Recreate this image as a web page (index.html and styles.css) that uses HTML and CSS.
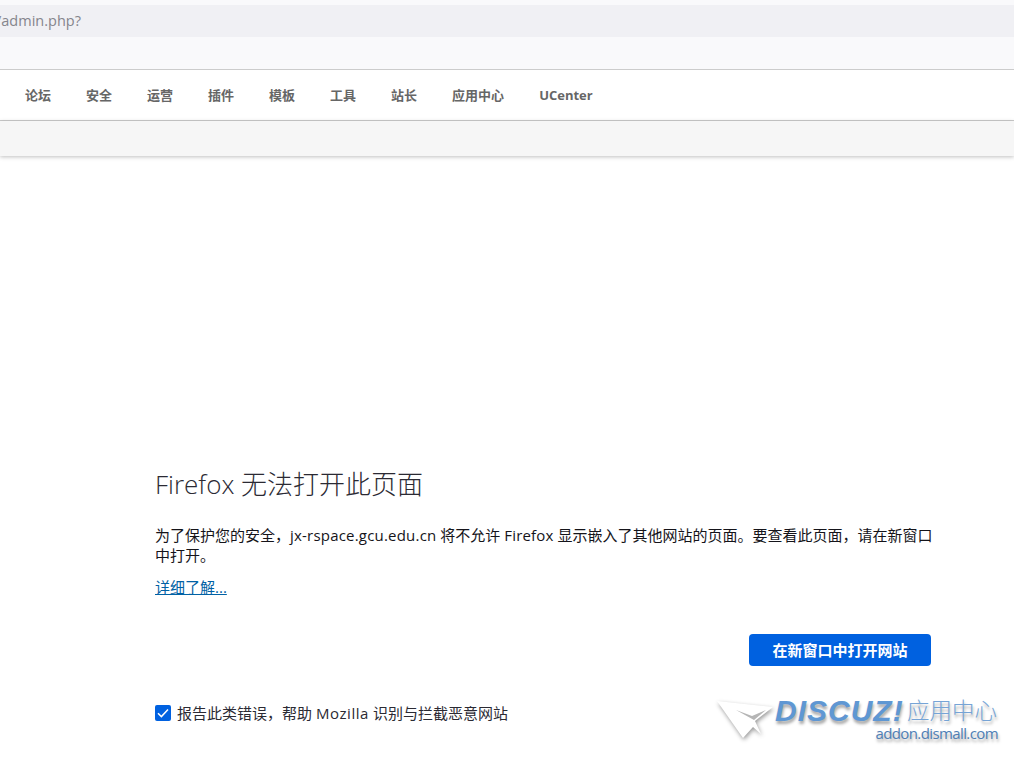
FILE: index.html
```html
<!DOCTYPE html>
<html lang="zh-CN">
<head>
    <meta charset="UTF-8">
    <title>Firefox 无法打开此页面</title>
    <link rel="stylesheet" href="styles.css">
</head>
<body>
    <!-- Barra do navegador -->
    <div class="urlbar-wrap">
        <div class="urlbar">/admin.php?</div>
    </div>
    <div class="toolbar"></div>

    <!-- Menu -->
    <nav class="nav">
        <a>论坛</a>
        <a>安全</a>
        <a>运营</a>
        <a>插件</a>
        <a>模板</a>
        <a>工具</a>
        <a>站长</a>
        <a>应用中心</a>
        <a class="nav-latin">UCenter</a>
    </nav>
    <div class="subbar"></div>

    <!-- Erro -->
    <main class="error">
        <h1>Firefox 无法打开此页面</h1>
        <p class="desc">为了保护您的安全，<span class="latin">jx-rspace.gcu.edu.cn</span> 将不允许 <span class="latin">Firefox</span> 显示嵌入了其他网站的页面。要查看此页面，请在新窗口<br>中打开。</p>
        <a class="more">详细了解...</a>
        <div class="actions">
            <button class="open-btn">在新窗口中打开网站</button>
        </div>
        <label class="report">
            <span class="check">
                <svg width="16" height="16" viewBox="0 0 16 16"><path d="M3 8.2 6.4 11.6 13 4.6" fill="none" stroke="#fff" stroke-width="1.5"/></svg>
            </span>
            <span>报告此类错误，帮助 <span class="latin-wide">Mozilla</span> 识别与拦截恶意网站</span>
        </label>
    </main>

    <!-- Marca d'agua -->
    <div class="watermark">
        <svg class="plane" width="58" height="44" viewBox="0 0 58 44">
            <path d="M1 5 57 11 39 25 45 38 37 31 27 42Z" fill="#fff"/>
            <path d="M20 14 36 20 50 14 38 24Z" fill="#b5b5b5"/>
        </svg>
        <div class="wm-text">
            <div class="wm-top"><span class="wm-brand">DISCUZ!</span><span class="wm-cn">应用中心</span></div>
            <div class="wm-url">addon.dismall.com</div>
        </div>
    </div>
</body>
</html>
```
FILE: styles.css
```css
html, body {
    margin: 0;
    padding: 0;
}

body {
    position: relative;
    width: 1014px;
    height: 759px;
    overflow: hidden;
    background-color: #fff;
    color: #15141a;
    font-family: "Open Sans", "Noto Sans CJK SC", sans-serif;
}

/* Barra do navegador */
.urlbar-wrap {
    background-color: #f9f9fb;
    padding-top: 5px;
}

.urlbar {
    height: 32px;
    line-height: 31px;
    background-color: #f0f0f4;
    color: #85858c;
    font-size: 14.5px;
    margin-left: -4px;
}

.toolbar {
    height: 32px;
    background-color: #f9f9fb;
    border-bottom: 1px solid #ccc;
}

/* Menu */
.nav {
    display: flex;
    gap: 35px;
    align-items: center;
    height: 50px;
    padding-left: 25px;
    font-size: 13px;
    line-height: 48px;
    font-weight: bold;
    color: #666;
    border-bottom: 1px solid #ccc;
}

.nav-latin {
    line-height: 50px;
}

.subbar {
    height: 35px;
    background-color: #f6f6f6;
    box-shadow: 0 1px 4px rgba(0, 0, 0, 0.25);
}

/* Erro */
.error {
    width: 776px;
    margin-left: 155px;
    padding-top: 309px;
}

h1 {
    margin: 0;
    font-size: 26px;
    font-weight: 300;
    line-height: 38px;
    color: #2b2a33;
}

.desc {
    margin: 22px -4px 0 0;
    font-size: 15px;
    line-height: 20px;
}

.latin {
    letter-spacing: 0.2px;
}

.latin-wide {
    letter-spacing: 0.55px;
}

.more {
    display: block;
    margin-top: 12px;
    font-size: 15px;
    line-height: 20px;
    color: #0061a4;
    text-decoration: underline;
}

.actions {
    display: flex;
    justify-content: flex-end;
    margin-top: 37px;
}

.open-btn {
    width: 182px;
    height: 32px;
    padding: 0 0 2px;
    border: none;
    border-radius: 4px;
    background-color: #0061e0;
    color: #fff;
    font-family: inherit;
    font-size: 15px;
    font-weight: bold;
}

.report {
    display: flex;
    align-items: center;
    gap: 6px;
    margin-top: 37px;
    font-size: 15px;
    line-height: 20px;
    color: #2b2a33;
}

.check {
    width: 16px;
    height: 16px;
    border-radius: 2px;
    background-color: #0061e0;
}

.check svg {
    display: block;
}

/* Marca d'agua */
.watermark {
    position: absolute;
    left: 716px;
    top: 696px;
    display: flex;
    align-items: flex-start;
}

.plane {
    filter: drop-shadow(1px 2px 2px rgba(0, 0, 0, 0.4));
}

.wm-text {
    margin-left: 1px;
    width: 223px;
    text-shadow: 1px 3px 3px rgba(0, 0, 0, 0.35);
}

.wm-top {
    display: flex;
    height: 29px;
    line-height: 29px;
    color: #76a4d6;
}

.wm-brand {
    width: 132px;
    font-family: "Liberation Sans", sans-serif;
    font-size: 30px;
    font-weight: bold;
    font-style: italic;
    letter-spacing: 1px;
    color: #5f97d3;
}

.wm-cn {
    font-size: 22.5px;
    font-weight: 300;
}

.wm-url {
    line-height: 16px;
    text-align: right;
    font-size: 15px;
    letter-spacing: -0.6px;
    color: #4f7fb5;
}
```
